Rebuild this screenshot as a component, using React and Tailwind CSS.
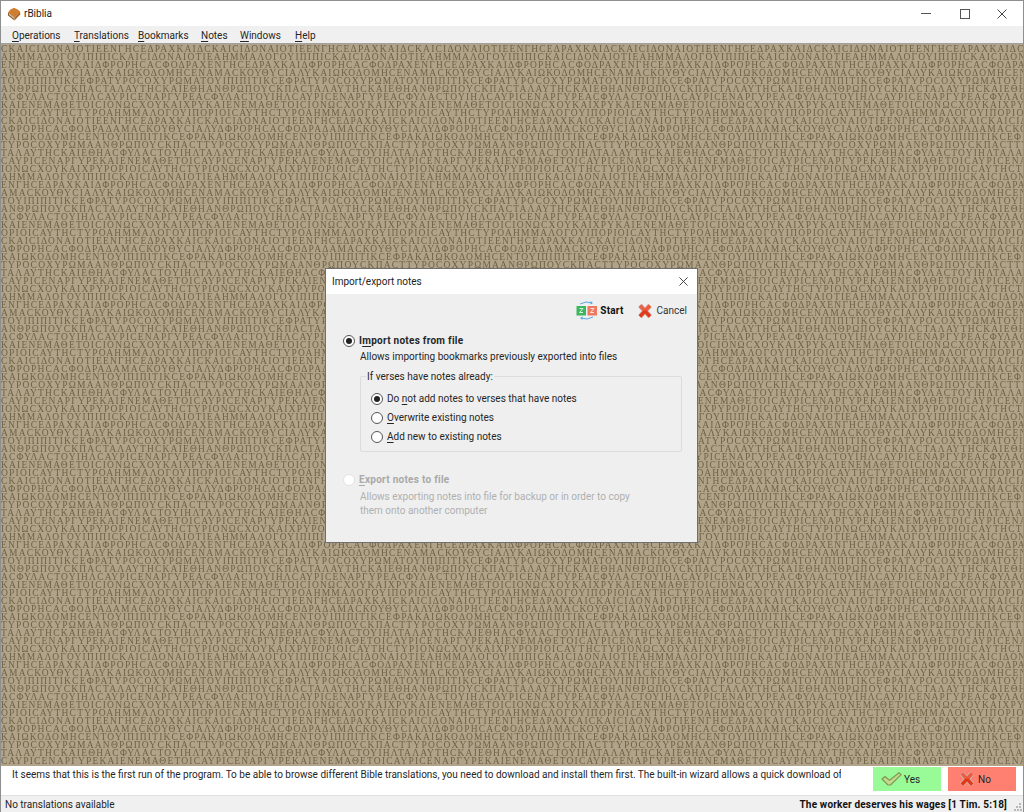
import React from "react";

const F = "font-['Roboto',sans-serif]";
const CYCLE = [
  "ΑΗΜΜΑΛΟΓΟΥΙΠΙΠΙCΚΑΙCΙΔΟΝΑΙΟΤΙΕ",
  "ΕΝΓΗCΕΔΡΑΧΚΑΙΔΦΡΟΡΗCΑCΦΟΔΡΑΧ",
  "ΑΜΑCΚΟΥΘΥCΙΑΛΥΚΑΙΩΚΟΔΟΜΗCΕΝ",
  "ΤΟΥΙΠΙΠΙΤΙΚCΕΦΡΑΤΥΡΟCΟΧΥΡΩΜΑ",
  "ΑΝΘΡΩΠΟΥCΚΠΑCΤΑΛΑΥΤΗCΚΑΙΕΘΗ",
  "ΑCΦΥΛΑCΤΟΥΙΗΛCΑΥΡΙCΕΝΑΡΓΥΡΕ",
  "ΚΑΙΕΝΕΜΑΘΕΤΟΙCΙΟΝΩCΧΟΥΚΑΙΧΡΥ",
  "ΟΡΙΟΙCΑΥΤΗCΤΥΡΟΑΗΜΜΑΛΟΓΟΥΙΠ",
  "CΚΑΙCΙΔΟΝΑΙΟΤΙΕΕΝΓΗCΕΔΡΑΧΚΑΙ",
  "ΔΦΡΟΡΗCΑCΦΟΔΡΑΔΑΜΑCΚΟΥΘΥCΙΑΛΥ",
  "ΚΑΙΩΚΟΔΟΜΗCΕΝΤΟΥΙΠΙΠΙΤΙΚCΕΦΡΑ",
  "ΤΥΡΟCΟΧΥΡΩΜΑΑΝΘΡΩΠΟΥCΚΠΑCΤ",
  "ΤΑΛΑΥΤΗCΚΑΙΕΘΗΑCΦΥΛΑCΤΟΥΙΗΛ",
  "CΑΥΡΙCΕΝΑΡΓΥΡΕΚΑΙΕΝΕΜΑΘΕΤΟΙ",
  "ΙΟΝΩCΧΟΥΚΑΙΧΡΥΡΟΡΙΟΙCΑΥΤΗCΤΥΡ",
];
const FIRST = "CΚΑΙCΙΔΟΝΑΙΟΤΙΕΕΝΓΗCΕΔΡΑΧΚΑΙΔ";

const rows = [];
for (let i = 0; i < 90; i++) {
  const s = i === 0 ? FIRST : CYCLE[(i - 1) % 15];
  rows.push(s.repeat(6));
}

const U = ({ children }) => <span className="underline underline-offset-2 decoration-1">{children}</span>;

function Radio({ on, off }) {
  return (
    <span className={`flex h-[12px] w-[12px] shrink-0 items-center justify-center rounded-full border bg-white ${off ? "border-[#e2e2e2]" : "border-[#555555]"}`}>
      {on && <span className="h-[6px] w-[6px] rounded-full bg-[#222222]" />}
    </span>
  );
}

const Book = () => (
  <svg width="14" height="14" viewBox="0 0 14 14">
    <path d="M1 5.5 Q3 2 7 0.8 Q10 2 13.2 4.5 L7.5 10.5 Z" fill="#cf7d2e" />
    <path d="M1 5.5 L7.5 10.5 L7.5 13.5 L1 8.5 Z" fill="#8a5a2a" />
    <path d="M7.5 10.5 L13.2 4.5 L13.2 7.5 L7.5 13.5 Z" fill="#a96420" />
    <path d="M2 6.6 L7.5 11 L7.5 12 L2 7.7Z" fill="#e8dcc8" />
  </svg>
);

const RedX = () => (
  <svg width="16" height="16" viewBox="0 0 16 16">
    <path d="M3 2.5 L13 13.5 M13 2.5 L3 13.5" stroke="#c9beb6" strokeWidth="5" />
    <path d="M3 2.5 L13 13.5" stroke="#e8604a" strokeWidth="3.6" />
    <path d="M13 2.5 L3 13.5" stroke="#ee5a3c" strokeWidth="3.6" />
    <path d="M8 8 L3 13.5 M8 8 L13 13.5" stroke="#df3a1c" strokeWidth="3" />
  </svg>
);

const Check = () => (
  <svg width="21" height="14" viewBox="0 0 21 14">
    <path d="M1 7 L4 4.5 L8.5 8.2 L18 0.8 L20.2 2.6 L9.5 13 L7 13 Z" fill="#c3d88a" stroke="#7f9a52" strokeWidth="1.2" strokeLinejoin="round" />
  </svg>
);

const StartIcon = () => (
  <svg width="21" height="19" viewBox="0 0 21 19">
    <path d="M4 3 Q10 -0.5 16 2" fill="none" stroke="#5aa9e0" strokeWidth="1" />
    <path d="M14.5 0 L17 2 L14.5 3.5Z" fill="#5aa9e0" />
    <path d="M17 16 Q11 19.5 5 17" fill="none" stroke="#5aa9e0" strokeWidth="1" />
    <path d="M6.5 15.5 L4 17 L6.5 19Z" fill="#5aa9e0" />
    <rect x="0.5" y="5" width="9.5" height="9.5" fill="#3eb55f" />
    <rect x="11.5" y="5" width="9.5" height="9.5" fill="#ee7a62" />
    <path d="M3.5 7.5 H7 L3.5 11.5 H7" fill="none" stroke="#d9f2df" strokeWidth="1" />
    <path d="M14.5 7.5 H18 L14.5 11.5 H18" fill="none" stroke="#fde3dc" strokeWidth="1" />
  </svg>
);

const CloseGlyph = ({ s = 10, c = "#444444" }) => (
  <svg width={s} height={s} viewBox="0 0 10 10">
    <path d="M0.5 0.5 L9.5 9.5 M9.5 0.5 L0.5 9.5" stroke={c} strokeWidth="1" />
  </svg>
);

const Grip = () => (
  <svg width="8" height="8" viewBox="0 0 8 8" fill="#b8b8b8">
    <rect x="5" y="0" width="2" height="2" />
    <rect x="2" y="3" width="2" height="2" />
    <rect x="5" y="3" width="2" height="2" />
    <rect x="0" y="6" width="2" height="2" />
    <rect x="3" y="6" width="2" height="2" />
    <rect x="6" y="6" width="2" height="2" />
  </svg>
);

export default function App() {
  return (
    <div className={`${F} flex h-[812px] w-[1024px] flex-col overflow-hidden border border-[#8f8f8f] border-b-0 bg-[#f0f0f0] text-[10px] leading-[15px] text-[#262626]`}>
      <div className="flex h-[25px] shrink-0 items-center bg-white pl-[6px]">
        <Book />
        <span className="ml-[3px] text-[#222222]">rBiblia</span>
        <div className="ml-auto flex items-center">
          <span className="flex w-[39px] justify-center"><span className="h-px w-[10px] bg-[#555555]" /></span>
          <span className="flex w-[39px] justify-center"><span className="h-[10px] w-[10px] border border-[#555555]" /></span>
          <span className="flex w-[39px] justify-center pr-[3px]"><CloseGlyph /></span>
        </div>
      </div>

      <div className="flex h-[18px] shrink-0 items-center border-b border-[#a0a0a0] bg-[#f0f0f0] pl-[11px] pt-[1px]">
        <span className="w-[62px]"><U>O</U>perations</span>
        <span className="w-[64px]"><U>T</U>ranslations</span>
        <span className="w-[63px]"><U>B</U>ookmarks</span>
        <span className="w-[39px]"><U>N</U>otes</span>
        <span className="w-[55px]"><U>W</U>indows</span>
        <span><U>H</U>elp</span>
      </div>

      <div className="relative min-h-0 flex-1 overflow-hidden bg-[#b0a38a]">
        <div className="font-['Liberation_Serif',serif] whitespace-nowrap pt-[1px] text-[9.5px] leading-[8px] tracking-[1.2px] text-[#6f6243] blur-[0.35px]">
          {rows.map((r, i) => (
            <div key={i} className="h-[8px]">{r}</div>
          ))}
        </div>

        <div className="absolute left-[324px] top-[224px] flex h-[275px] w-[373px] flex-col border border-[#6f6f6f] bg-[#efefef]">
          <div className="flex h-[25px] shrink-0 items-center justify-between bg-white pl-[6px] pr-[9px]">
            <span className="text-[#222222]">Import/export notes</span>
            <CloseGlyph s={9} c="#333333" />
          </div>

          <div className="flex h-[28px] shrink-0 items-center justify-end pr-[10px] pt-[5px]">
            <StartIcon />
            <span className="ml-[3px] font-bold tracking-[0.2px] text-[#111111]">Start</span>
            <span className="ml-[13px]"><RedX /></span>
            <span className="ml-[4px] text-[#333333]">Cancel</span>
          </div>

          <div className="flex flex-col pl-[17px] pt-[11px]">
            <label className="flex h-[15px] items-center gap-[4px]">
              <Radio on />
              <span className="font-bold tracking-[0.27px]"><span>I</span><U>m</U>port notes from file</span>
            </label>
            <p className="ml-[17px] mt-[1px]">Allows importing bookmarks previously exported into files</p>

            <fieldset className="ml-[17px] mt-[5px] h-[83px] w-[322px] rounded-[2px] border border-[#dcdcdc] pl-[10px]">
              <legend className="ml-[-5px] px-[1px]">If verses have notes already:</legend>
              <div className="mt-[7px] flex flex-col gap-[4px]">
                <label className="flex h-[15px] items-center gap-[4px]"><Radio on /><span>Do <U>n</U>ot add notes to verses that have notes</span></label>
                <label className="flex h-[15px] items-center gap-[4px]"><Radio /><span><U>O</U>verwrite existing notes</span></label>
                <label className="flex h-[15px] items-center gap-[4px]"><Radio /><span><U>A</U>dd new to existing notes</span></label>
              </div>
            </fieldset>

            <label className="mt-[20px] flex h-[15px] items-center gap-[4px] text-[#a8a8a8]">
              <Radio off />
              <span className="font-bold tracking-[0.27px]"><U>E</U>xport notes to file</span>
            </label>
            <p className="ml-[17px] mt-[3px] w-[285px] leading-[14px] text-[#b0b0b0]">Allows exporting notes into file for backup or in order to copy them onto another computer</p>
          </div>
        </div>
      </div>

      <div className="flex h-[29px] shrink-0 items-start bg-white pl-[11px] pt-[1px]">
        <span className="min-w-0 flex-1 overflow-hidden whitespace-nowrap">It seems that this is the first run of the program. To be able to browse different Bible translations, you need to download and install them first. The built-in wizard allows a quick download of</span>
        <div className="ml-[32px] flex shrink-0 gap-[7px] pr-[7px]">
          <span className="flex h-[24px] w-[68px] items-center gap-[2px] bg-[#98fb98] pl-[8px]"><Check /><span>Yes</span></span>
          <span className="flex h-[24px] w-[68px] items-center gap-[3px] bg-[#ff8070] pl-[11px]"><RedX /><span>No</span></span>
        </div>
      </div>

      <div className="flex h-[17px] shrink-0 items-center justify-between border-t border-[#e0e0e0] bg-[#f0f0f0] pl-[4px] pr-[1px]">
        <span>No translations available</span>
        <div className="flex items-center gap-[7px]">
          <span className="font-bold tracking-[0.17px] text-[#111111]">The worker deserves his wages [1 Tim. 5:18]</span>
          <span className="mt-[5px]"><Grip /></span>
        </div>
      </div>
    </div>
  );
}
